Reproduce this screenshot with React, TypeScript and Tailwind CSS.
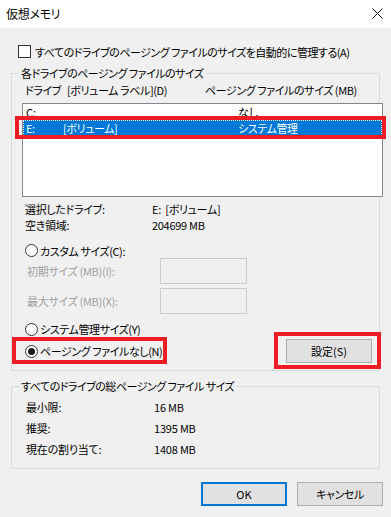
import React from "react";

const font = {
  fontFamily: '"Noto Sans CJK JP", "Noto Sans", sans-serif',
  fontFeatureSettings: '"palt"',
} as React.CSSProperties;

function Radio({ checked }: { checked?: boolean }) {
  return (
    <span className="w-[13px] h-[13px] rounded-full border border-[#333333] bg-white flex items-center justify-center shrink-0">
      {checked && <span className="w-[7px] h-[7px] rounded-full bg-[#1a1a1a]" />}
    </span>
  );
}

export default function App() {
  return (
    <div
      className="relative w-[391px] h-[517px] bg-[#f0f0f0] flex flex-col text-[11px] leading-[16px] text-black overflow-hidden"
      style={font}
    >
      {/* Title bar */}
      <div className="h-[28px] bg-white flex items-center justify-between pl-[6px] pr-[8px] shrink-0">
        <span className="text-[12px] tracking-[-0.3px]">仮想メモリ</span>
        <svg width="11" height="11" viewBox="0 0 11 11" className="mt-[-2px]">
          <path d="M0.5 0.5 L10.5 10.5 M10.5 0.5 L0.5 10.5" stroke="#111" strokeWidth="1" />
        </svg>
      </div>

      <div className="flex flex-col pl-[11px] pr-[11px]">
        {/* Auto manage checkbox */}
        <div className="mt-[17px] ml-[7px] flex items-center h-[13px] gap-[4px]">
          <span className="w-[13px] h-[13px] border border-[#333333] bg-white shrink-0" />
          <span className="whitespace-nowrap tracking-[-0.5px]">すべてのドライブのページング ファイルのサイズを自動的に管理する(A)</span>
        </div>

        {/* Group 1 */}
        <fieldset className="mt-[7px] border border-[#dcdcdc] pb-[7px] min-w-0">
          <legend className="ml-[7px] px-[2px] leading-[16px] tracking-[-0.5px]">各ドライブのページング ファイルのサイズ</legend>
          <div className="flex pl-[13px] mt-[1px] h-[16px] whitespace-nowrap tracking-[-0.4px]">
            <span className="w-[42px]">ドライブ</span>
            <span className="w-[138px]">[ボリューム ラベル](D)</span>
            <span>ページング ファイルのサイズ (MB)</span>
          </div>
          {/* Listbox */}
          <div className="mt-[5px] ml-[10px] mr-[-4px] h-[94px] border border-[#828790] bg-white flex flex-col">
            <div className="flex h-[16px] items-center pl-[3px] whitespace-nowrap">
              <span className="w-[37px]">C:</span>
              <span className="w-[175px]"></span>
              <span>なし</span>
            </div>
            <div className="flex h-[16px] items-center pl-[3px] whitespace-nowrap bg-[#0078d7] text-white outline outline-1 outline-dotted outline-[#ffffff] outline-offset-[-1px] tracking-[-0.4px]">
              <span className="w-[37px]">E:</span>
              <span className="w-[175px]">[ボリューム]</span>
              <span>システム管理</span>
            </div>
          </div>

          {/* Info rows */}
          <div className="mt-[4px] pl-[13px] grid grid-cols-[127px_1fr] whitespace-nowrap tracking-[-0.3px]">
            <span>選択したドライブ:</span>
            <span>E:&nbsp;&nbsp;[ボリューム]</span>
            <span>空き領域:</span>
            <span>204699 MB</span>
          </div>

          {/* Custom size */}
          <div className="mt-[10px] pl-[13px] flex items-center gap-[2px] h-[15px] tracking-[-0.4px]">
            <Radio />
            <span>カスタム サイズ(C):</span>
          </div>
          <div className="pl-[15px] flex items-center h-[26px] text-[#a0a0a0] tracking-[-0.3px]">
            <span className="w-[133px] whitespace-nowrap">初期サイズ (MB)(I):</span>
            <span className="w-[87px] h-[26px] border border-[#cccccc] bg-[#f0f0f0]" />
          </div>
          <div className="mt-[4px] pl-[15px] flex items-center h-[26px] text-[#a0a0a0] tracking-[-0.3px]">
            <span className="w-[133px] whitespace-nowrap">最大サイズ (MB)(X):</span>
            <span className="w-[87px] h-[26px] border border-[#cccccc] bg-[#f0f0f0]" />
          </div>

          <div className="mt-[7px] pl-[13px] flex items-center gap-[2px] h-[16px] tracking-[-0.4px]">
            <Radio />
            <span>システム管理サイズ(Y)</span>
          </div>
          <div className="mt-[2px] pl-[13px] pr-[7px] flex items-center justify-between h-[24px]">
            <div className="flex items-center gap-[2px] tracking-[-0.4px]">
              <Radio checked />
              <span>ページング ファイルなし(N)</span>
            </div>
            <button className="w-[86px] h-[24px] border border-[#adadad] bg-[#e1e1e1] text-[11px]">
              設定(S)
            </button>
          </div>
        </fieldset>

        {/* Group 2 */}
        <fieldset className="mt-[7px] border border-[#dcdcdc] pb-[9px] min-w-0">
          <legend className="ml-[7px] px-[2px] leading-[16px] tracking-[-0.5px]">すべてのドライブの総ページング ファイル サイズ</legend>
          <div className="mt-[2px] pl-[14px] grid grid-cols-[128px_1fr] auto-rows-[21px] items-center whitespace-nowrap tracking-[-0.2px]">
            <span>最小限:</span>
            <span>16 MB</span>
            <span>推奨:</span>
            <span>1395 MB</span>
            <span>現在の割り当て:</span>
            <span>1408 MB</span>
          </div>
        </fieldset>
      </div>

      {/* Buttons */}
      <div className="mt-[13px] flex justify-end gap-[10px] pr-[8px]">
        <button className="w-[86px] h-[24px] border-2 border-[#0078d7] bg-[#e1e1e1] text-[11px]">OK</button>
        <button className="w-[86px] h-[24px] border border-[#adadad] bg-[#e1e1e1] text-[11px] tracking-[-0.4px]">キャンセル</button>
      </div>

      {/* Red annotation boxes */}
      <div className="absolute left-[15px] top-[116px] w-[371px] h-[23px] border-4 border-[#ed1c24] pointer-events-none" />
      <div className="absolute left-[12px] top-[337px] w-[155px] h-[27px] border-4 border-[#ed1c24] pointer-events-none" />
      <div className="absolute left-[274px] top-[332px] w-[107px] h-[37px] border-4 border-[#ed1c24] pointer-events-none" />
    </div>
  );
}
